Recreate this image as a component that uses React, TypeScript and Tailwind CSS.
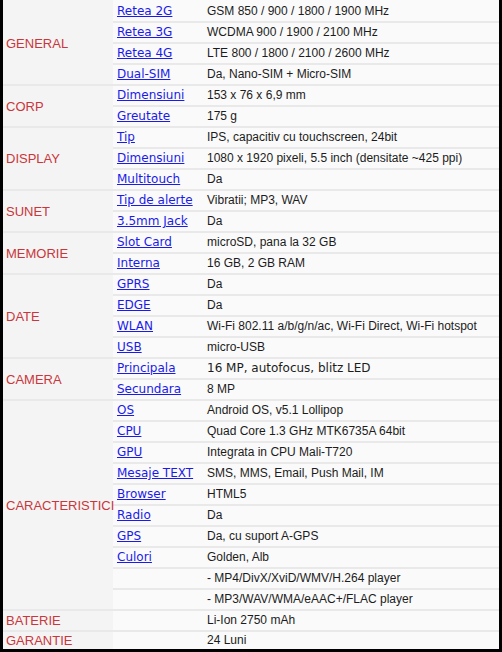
import React from "react";

type Spec = { label?: string; value: string; verdana?: boolean };
type Group = { name: string; rows: Spec[] };

const specs: Group[] = [
  {
    name: "GENERAL",
    rows: [
      { label: "Retea 2G", value: "GSM 850 / 900 / 1800 / 1900 MHz" },
      { label: "Retea 3G", value: "WCDMA 900 / 1900 / 2100 MHz" },
      { label: "Retea 4G", value: "LTE 800 / 1800 / 2100 / 2600 MHz" },
      { label: "Dual-SIM", value: "Da, Nano-SIM + Micro-SIM" },
    ],
  },
  {
    name: "CORP",
    rows: [
      { label: "Dimensiuni", value: "153 x 76 x 6,9 mm" },
      { label: "Greutate", value: "175 g" },
    ],
  },
  {
    name: "DISPLAY",
    rows: [
      { label: "Tip", value: "IPS, capacitiv cu touchscreen, 24bit" },
      { label: "Dimensiuni", value: "1080 x 1920 pixeli, 5.5 inch (densitate ~425 ppi)" },
      { label: "Multitouch", value: "Da" },
    ],
  },
  {
    name: "SUNET",
    rows: [
      { label: "Tip de alerte", value: "Vibratii; MP3, WAV" },
      { label: "3.5mm Jack", value: "Da" },
    ],
  },
  {
    name: "MEMORIE",
    rows: [
      { label: "Slot Card", value: "microSD, pana la 32 GB" },
      { label: "Interna", value: "16 GB, 2 GB RAM" },
    ],
  },
  {
    name: "DATE",
    rows: [
      { label: "GPRS", value: "Da" },
      { label: "EDGE", value: "Da" },
      { label: "WLAN", value: "Wi-Fi 802.11 a/b/g/n/ac, Wi-Fi Direct, Wi-Fi hotspot" },
      { label: "USB", value: "micro-USB" },
    ],
  },
  {
    name: "CAMERA",
    rows: [
      { label: "Principala", value: "16 MP, autofocus, blitz LED", verdana: true },
      { label: "Secundara", value: "8 MP" },
    ],
  },
  {
    name: "CARACTERISTICI",
    rows: [
      { label: "OS", value: "Android OS, v5.1 Lollipop" },
      { label: "CPU", value: "Quad Core 1.3 GHz MTK6735A 64bit" },
      { label: "GPU", value: "Integrata in CPU Mali-T720" },
      { label: "Mesaje TEXT", value: "SMS, MMS, Email, Push Mail, IM" },
      { label: "Browser", value: "HTML5" },
      { label: "Radio", value: "Da" },
      { label: "GPS", value: "Da, cu suport A-GPS" },
      { label: "Culori", value: "Golden, Alb" },
      { value: "- MP4/DivX/XviD/WMV/H.264 player" },
      { value: "- MP3/WAV/WMA/eAAC+/FLAC player" },
    ],
  },
  { name: "BATERIE", rows: [{ value: "Li-Ion 2750 mAh" }] },
  { name: "GARANTIE", rows: [{ value: "24 Luni" }] },
];

export default function App() {
  return (
    <div className="w-[502px] h-[652px] overflow-hidden bg-white">
      <div className="border-x-[3px] border-b-[3px] border-black">
        <table className="w-full border-separate border-spacing-0 table-fixed">
          <colgroup>
            <col className="w-[110px]" />
            <col className="w-[90px]" />
            <col />
          </colgroup>
          <tbody>
            {specs.map((g, gi) =>
              g.rows.map((r, ri) => {
                const top = gi === 0 && ri === 0;
                const last = gi === specs.length - 1;
                const line = top ? "border-[#fafafa]" : "border-[#e9e9e9]";
                const lh = last ? "leading-[17px]" : "leading-[19px]";
                return (
                  <tr key={g.name + ri}>
                    {ri === 0 && (
                      <td
                        rowSpan={g.rows.length}
                        className={`border-t-2 ${top ? "border-[#f4f4f4]" : "border-[#e9e9e9]"} bg-[#f4f4f4] pl-[3px] align-middle text-[13px] ${lh} text-[#c9363b] font-['Liberation_Sans',Arial,sans-serif]`}
                      >
                        {g.name}
                      </td>
                    )}
                    <td
                      className={`border-t-2 ${line} bg-[#fafafa] pl-1 ${lh} text-[12px] font-['DejaVu_Sans',Verdana,sans-serif] whitespace-nowrap`}
                    >
                      {r.label && (
                        <a href="#" className="text-[#1a1aeb] underline underline-offset-1">
                          {r.label}
                        </a>
                      )}
                    </td>
                    <td
                      className={`border-t-2 ${line} bg-[#fafafa] pl-[4px] ${lh} text-[12px] text-[#1c1c1c] whitespace-nowrap ${
                        r.verdana
                          ? "font-['DejaVu_Sans',Verdana,sans-serif]"
                          : "font-['Liberation_Sans',Arial,sans-serif]"
                      }`}
                    >
                      {r.value}
                    </td>
                  </tr>
                );
              })
            )}
          </tbody>
        </table>
      </div>
    </div>
  );
}
